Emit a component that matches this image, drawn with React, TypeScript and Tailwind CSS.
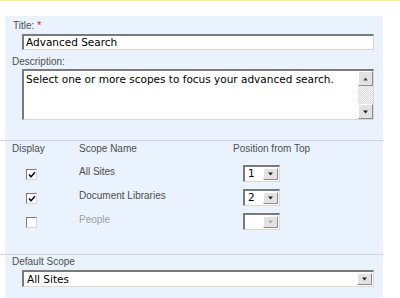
import React from "react";

const labelFont = { fontFamily: '"Liberation Sans", Arial, sans-serif' };
const inputFont = { fontFamily: '"DejaVu Sans", Verdana, sans-serif' };

function DownBtn({ disabled = false }: { disabled?: boolean }) {
  return (
    <div className="flex h-full w-[15px] shrink-0 items-center justify-center border border-t-white border-l-white border-r-[#8c8c8c] border-b-[#8c8c8c] bg-[#e2e2e2]">
      <svg width="7" height="4" viewBox="0 0 7 4">
        <path d="M1 0.5 H6 L3.5 3.5 Z" fill={disabled ? "#a8a8a8" : "#222"} />
      </svg>
    </div>
  );
}

function UpBtn() {
  return (
    <div className="flex h-[15px] w-[15px] shrink-0 items-center justify-center border border-t-white border-l-white border-r-[#8c8c8c] border-b-[#8c8c8c] bg-[#e2e2e2]">
      <svg width="7" height="4" viewBox="0 0 7 4">
        <path d="M1 3.5 H6 L3.5 0.5 Z" fill="#555" />
      </svg>
    </div>
  );
}

function Select({ value, w, disabled = false }: { value: string; w: string; disabled?: boolean }) {
  return (
    <div
      className={`flex h-[17px] ${w} items-stretch border-t-2 border-l-2 border-r border-b border-t-[#7a7a7a] border-l-[#7a7a7a] border-r-[#dcd8cc] border-b-[#dcd8cc] bg-white p-px`}
    >
      <div className="flex flex-1 items-center pl-[2px] text-[10.5px] leading-none text-black" style={inputFont}>
        {value}
      </div>
      <DownBtn disabled={disabled} />
    </div>
  );
}

function Check({ checked }: { checked: boolean }) {
  return (
    <div className="flex h-[11px] w-[11px] items-center justify-center border border-t-[#7a7a7a] border-l-[#7a7a7a] border-r-[#d8d8d8] border-b-[#d8d8d8] bg-white">
      {checked && (
        <svg width="8" height="8" viewBox="0 0 8 8">
          <path d="M1 3.5 L3 5.8 L7 1.2" stroke="#111" strokeWidth="1.6" fill="none" />
        </svg>
      )}
    </div>
  );
}

export default function App() {
  const rows = [
    { name: "All Sites", checked: true, pos: "1", disabled: false },
    { name: "Document Libraries", checked: true, pos: "2", disabled: false },
    { name: "People", checked: false, pos: "", disabled: true },
  ];
  return (
    <div className="relative h-[298px] w-[400px] overflow-hidden bg-white text-[#4e4e4e]" style={labelFont}>
      <div className="h-px bg-[#fbe9a8]" />
      <div className="h-[15px]" />
      <div className="w-[383px]">
        {/* Section 1 */}
        <div className="flex border-b border-[#d4d4d4]">
          <div className="w-[5px] shrink-0" />
          <div className="flex-1 bg-[#eaf2fd] pb-[20px] pr-[9px] pt-[3px]">
            <div className="pl-[8px] text-[10px] leading-[12px]">
              Title: <span className="text-[11px] text-[#e02020]">*</span>
            </div>
            <div className="ml-[17px] mt-[2px] flex h-[16px] items-center border-t-2 border-l-2 border-r border-b border-t-[#7a7a7a] border-l-[#7a7a7a] border-r-[#dcd8cc] border-b-[#dcd8cc] bg-white pl-[2px] text-[10.5px] leading-none text-black" style={inputFont}>
              Advanced Search
            </div>
            <div className="mt-[6px] pl-[7px] text-[10px] leading-[12px]">Description:</div>
            <div className="ml-[17px] mt-px flex h-[51px] border-t-2 border-l-2 border-r border-b border-t-[#7a7a7a] border-l-[#7a7a7a] border-r-[#dcd8cc] border-b-[#dcd8cc] bg-white">
              <div className="flex-1 pl-[2px] pt-[2px] text-[10.5px] leading-[12px] text-black" style={inputFont}>
                Select one or more scopes to focus your advanced search.
              </div>
              <div
                className="flex w-[15px] flex-col justify-between"
                style={{
                  backgroundImage:
                    "repeating-conic-gradient(#f4f4f4 0% 25%, #dcdcdc 0% 50%)",
                  backgroundSize: "2px 2px",
                }}
              >
                <UpBtn />
                <div className="h-[15px]">
                  <DownBtn />
                </div>
              </div>
            </div>
          </div>
        </div>

        {/* Section 2 */}
        <div className="flex border-b border-[#d4d4d4]">
          <div className="w-[5px] shrink-0" />
          <div className="flex-1 bg-[#eaf2fd] pb-[21px] pt-[2px]">
            <div className="flex pl-[7px] text-[10px] leading-[12px]">
              <div className="w-[67px]">Display</div>
              <div className="w-[154px]">Scope Name</div>
              <div>Position from Top</div>
            </div>
            <div className="mt-[6px]">
              {rows.map((r) => (
                <div key={r.name} className="flex h-[24px] items-center pl-[7px] text-[10px]">
                  <div className="w-[67px] pl-[14px] pt-[3px]">
                    <Check checked={r.checked} />
                  </div>
                  <div className={`w-[164px] pb-[3px] ${r.disabled ? "text-[#a0a0a0]" : ""}`}>{r.name}</div>
                  <Select value={r.pos} w="w-[37px]" disabled={r.disabled} />
                </div>
              ))}
            </div>
          </div>
        </div>

        {/* Section 3 */}
        <div className="flex">
          <div className="w-[5px] shrink-0" />
          <div className="h-[44px] flex-1 bg-[#eaf2fd] pr-[9px] pt-[1px]">
            <div className="pl-[7px] text-[10px] leading-[12px]">Default Scope</div>
            <div className="ml-[17px] mt-[2px]">
              <Select value="All Sites" w="w-full" />
            </div>
          </div>
        </div>
      </div>
    </div>
  );
}
